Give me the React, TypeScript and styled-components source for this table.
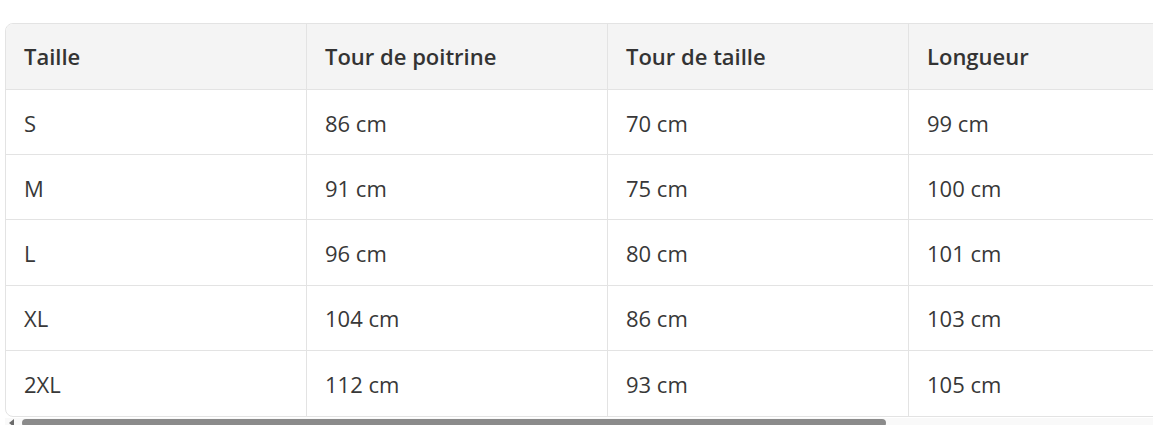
import styled, { createGlobalStyle } from 'styled-components';

const GlobalStyle = createGlobalStyle`
  html, body {
    margin: 0;
    padding: 0;
    background: #ffffff;
    overflow: hidden;
  }
  body {
    font-family: "Open Sans", "Noto Sans", sans-serif;
    color: #333333;
  }
`;

const StyledScroller = styled.div`
  margin: 23px 0 0 5px;
  width: 1158px;
  overflow: hidden;
`;

const StyledTable = styled.table`
  table-layout: fixed;
  width: 1505px;
  border-collapse: separate;
  border-spacing: 0;
  border: 1px solid #e3e3e3;
  border-radius: 8px;
  overflow: hidden;
`;

const StyledHeadCell = styled.th<{ $wide?: boolean }>`
  width: ${({ $wide }) => ($wide ? 'auto' : '301px')};
  height: 66px;
  box-sizing: border-box;
  padding: 0 18px 1px;
  background: #f4f4f4;
  text-align: left;
  font-size: 22px;
  font-weight: 600;
  color: #333333;
  border-right: 1px solid #e3e3e3;
  border-bottom: 1px solid #e3e3e3;
  &:last-child {
    border-right: none;
  }
`;

const StyledCell = styled.td<{ $last: boolean }>`
  height: 65.2px;
  box-sizing: border-box;
  padding: 1px 18px 0;
  font-size: 22px;
  font-weight: 400;
  color: #383838;
  border-right: 1px solid #e3e3e3;
  border-bottom: ${({ $last }) => ($last ? 'none' : '1px solid #e3e3e3')};
  &:last-child {
    border-right: none;
  }
`;

const StyledScrollbar = styled.div`
  display: flex;
  align-items: flex-start;
  height: 8px;
  margin-top: 1px;
  padding-left: 4px;
  background: #f9f9f9;
`;

const StyledArrow = styled.div<{ $dir: 'left' | 'right' }>`
  flex: none;
  width: 0;
  height: 0;
  margin-top: 1px;
  border-top: 4px solid transparent;
  border-bottom: 4px solid transparent;
  ${({ $dir }) =>
    $dir === 'left'
      ? 'border-right: 5px solid #6a6a6a; margin-right: 8px;'
      : 'border-left: 5px solid #6a6a6a; margin-left: auto; margin-right: 3px;'}
`;

const StyledThumb = styled.div`
  flex: none;
  width: 864px;
  height: 8px;
  margin-top: 1px;
  border-radius: 4px;
  background: #8b8b8b;
`;

const headers = ['Taille', 'Tour de poitrine', 'Tour de taille', 'Longueur'];

const rows = [
  ['S', '86 cm', '70 cm', '99 cm'],
  ['M', '91 cm', '75 cm', '100 cm'],
  ['L', '96 cm', '80 cm', '101 cm'],
  ['XL', '104 cm', '86 cm', '103 cm'],
  ['2XL', '112 cm', '93 cm', '105 cm'],
];

export default function App() {
  return (
    <>
      <GlobalStyle />
      <StyledScroller>
        <StyledTable>
          <thead>
            <tr>
              {headers.map((h, j) => (
                <StyledHeadCell key={h} $wide={j === headers.length - 1}>
                  {h}
                </StyledHeadCell>
              ))}
            </tr>
          </thead>
          <tbody>
            {rows.map((row, i) => (
              <tr key={row[0]}>
                {row.map((cell, j) => (
                  <StyledCell key={j} $last={i === rows.length - 1}>
                    {cell}
                  </StyledCell>
                ))}
              </tr>
            ))}
          </tbody>
        </StyledTable>
        <StyledScrollbar>
          <StyledArrow $dir="left" />
          <StyledThumb />
          <StyledArrow $dir="right" />
        </StyledScrollbar>
      </StyledScroller>
    </>
  );
}
